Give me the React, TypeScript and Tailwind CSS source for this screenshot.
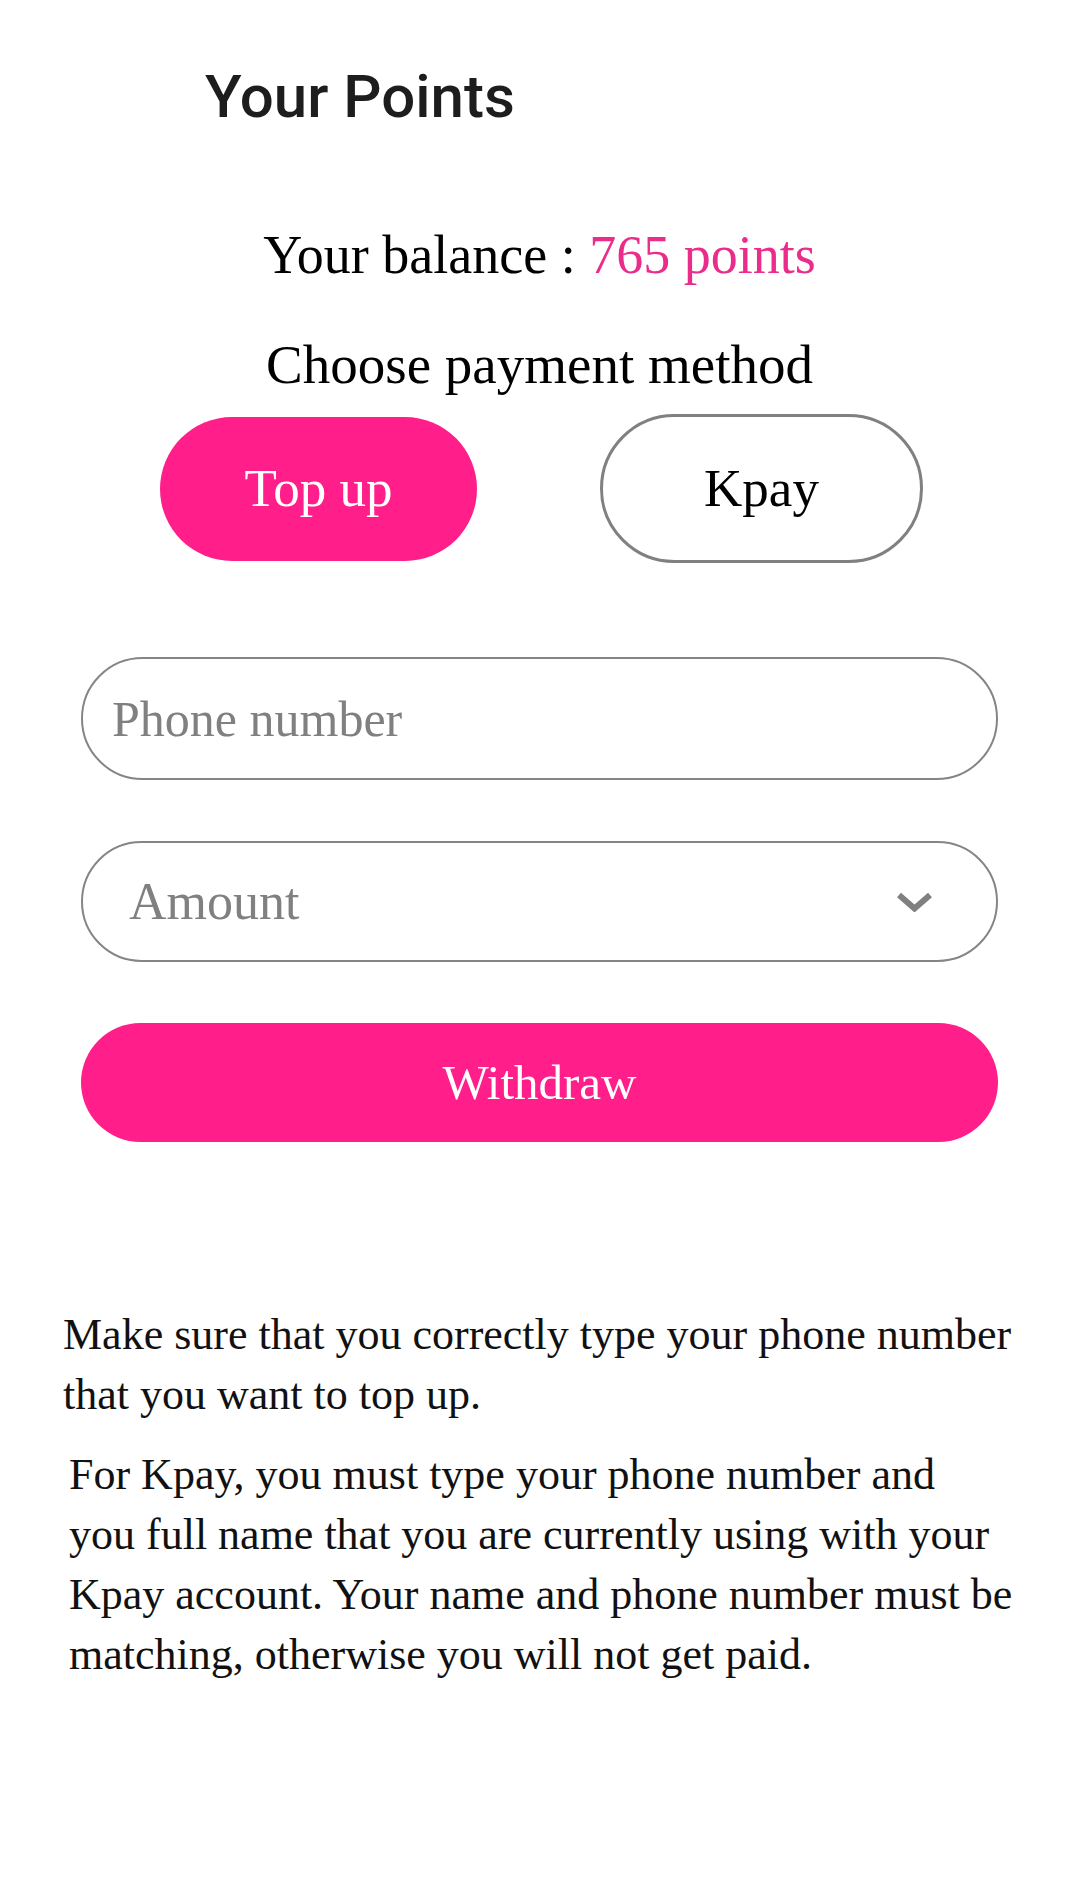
import { useState } from 'react';

export default function App() {
    const [method, setMethod] = useState<'topup' | 'kpay'>('topup');
    const [phone, setPhone] = useState('');

    return (
        <div className="min-h-[1896px] w-[1066px] bg-white text-black">
            <h1 className="pl-[205px] pt-[67px] font-['Roboto',sans-serif] text-[60px] font-medium leading-none text-[#1d1d1d]">
                Your Points
            </h1>

            <div className="ml-[81px] flex w-[917px] flex-col font-['Liberation_Serif',serif]">
                <p className="mt-[101px] text-center text-[54px] leading-none">
                    Your balance : <span className="text-[#ea2d8b]">765 points</span>
                </p>
                <p className="mt-[55px] text-center text-[55px] leading-none">Choose payment method</p>

                {/* Payment method */}
                <div className="mt-[22px] flex items-center justify-between pl-[79px] pr-[75px]">
                    <button
                        type="button"
                        onClick={() => setMethod('topup')}
                        className={
                            method === 'topup'
                                ? 'h-[144px] w-[317px] rounded-full bg-[#ff1e8a] text-[53px] leading-none text-white'
                                : 'h-[144px] w-[317px] rounded-full border-[3px] border-[#808080] bg-white text-[53px] leading-none text-black'
                        }
                    >
                        Top up
                    </button>
                    <button
                        type="button"
                        onClick={() => setMethod('kpay')}
                        className={
                            method === 'kpay'
                                ? 'h-[149px] w-[323px] rounded-full bg-[#ff1e8a] text-[53px] leading-none text-white'
                                : 'h-[149px] w-[323px] rounded-full border-[3px] border-[#808080] bg-white text-[53px] leading-none text-black'
                        }
                    >
                        Kpay
                    </button>
                </div>

                <input
                    type="tel"
                    value={phone}
                    onChange={e => setPhone(e.target.value)}
                    placeholder="Phone number"
                    className="mt-[94px] h-[123px] w-full rounded-full border-2 border-[#858585] bg-white pl-[29px] font-['Liberation_Serif',serif] text-[50px] text-black outline-none placeholder:text-[#808080]"
                />

                <div className="mt-[61px] flex h-[121px] w-full items-center justify-between rounded-full border-2 border-[#858585] pl-[46px] pr-[63px]">
                    <span className="text-[52px] leading-none text-[#808080]">Amount</span>
                    <svg width="37" height="20" viewBox="0 0 37 20" fill="none">
                        <polyline points="3,3 18.5,16.5 34,3" stroke="#808080" strokeWidth="6" />
                    </svg>
                </div>

                <button
                    type="button"
                    className="mt-[61px] h-[119px] w-full rounded-full bg-[#ff1e8a] text-[49px] leading-none text-white"
                >
                    Withdraw
                </button>
            </div>

            {/* Notes */}
            <div className="mt-[163px] font-['Liberation_Serif',serif] text-[44px] leading-[60px] text-[#111]">
                <p className="pl-[63px]">
                    Make sure that you correctly type your phone number
                    <br />
                    that you want to top up.
                </p>
                <p className="mt-[20px] pl-[69px]">
                    For Kpay, you must type your phone number and
                    <br />
                    you full name that you are currently using with your
                    <br />
                    Kpay account. Your name and phone number must be
                    <br />
                    matching, otherwise you will not get paid.
                </p>
            </div>
        </div>
    );
}
